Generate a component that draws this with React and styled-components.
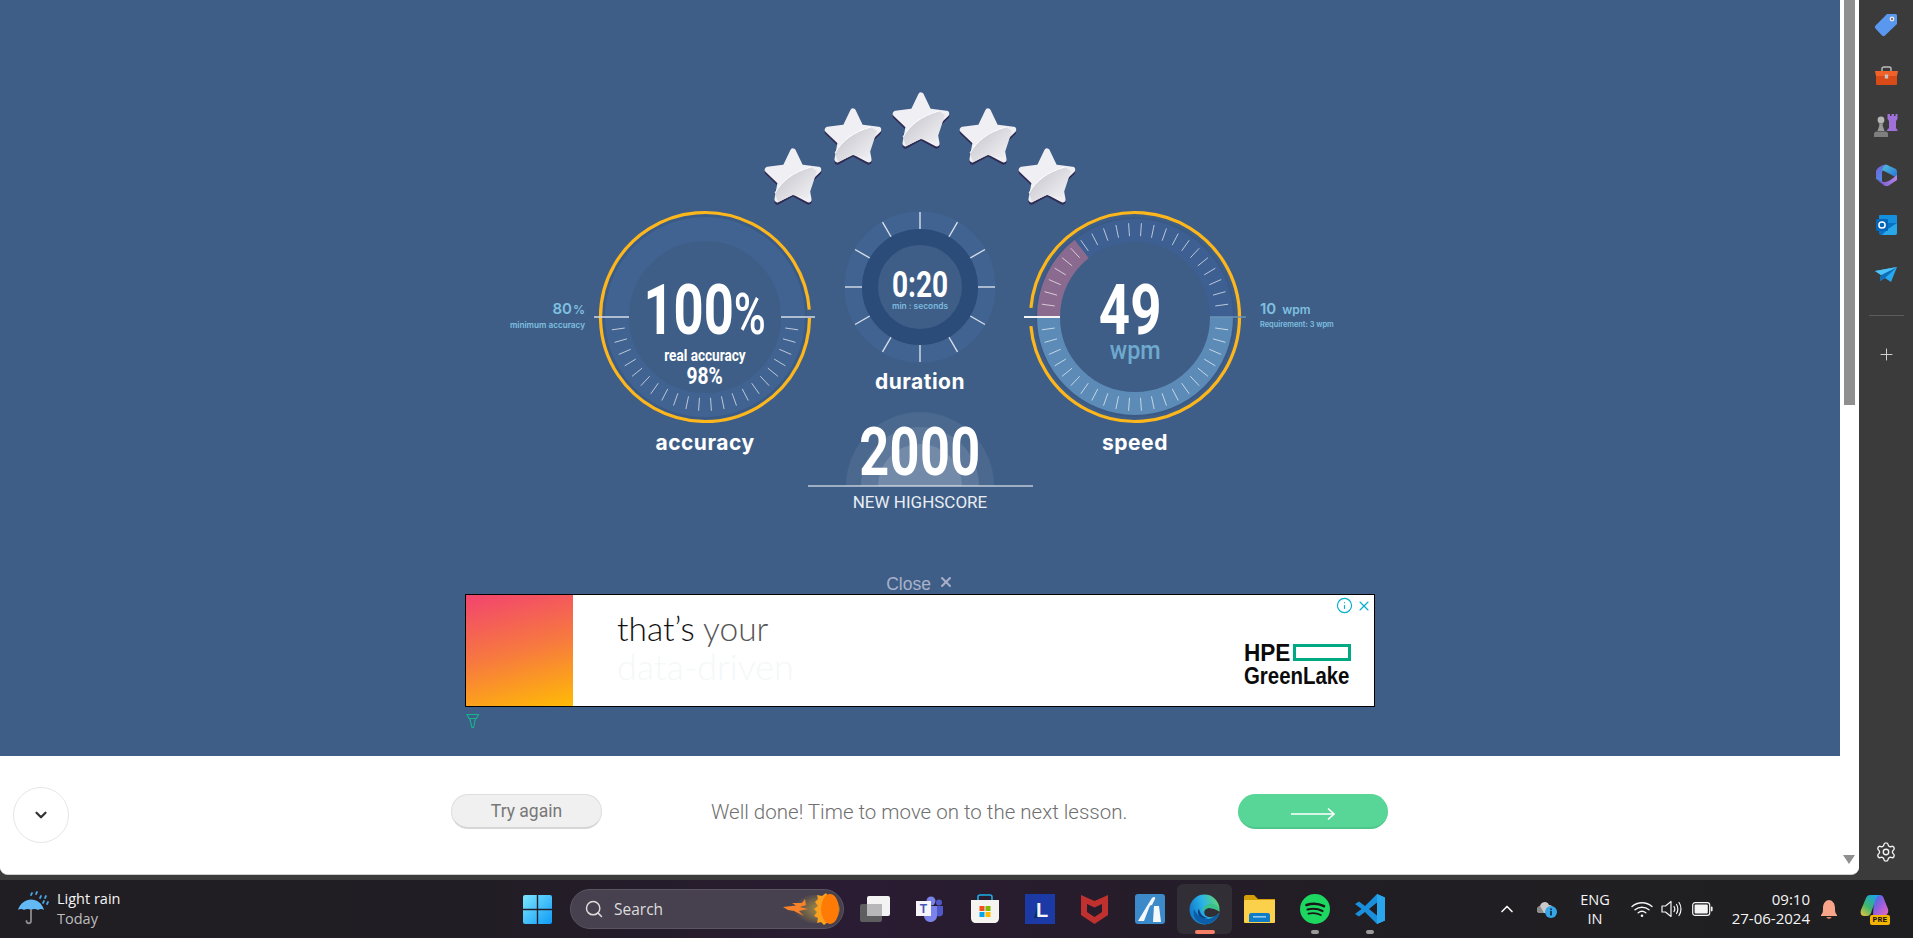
import React, { useId } from 'react';
import styled, { createGlobalStyle } from 'styled-components';
import { Search, ChevronDown, ChevronUp, Plus, Settings, X, Info } from 'lucide-react';

const GlobalStyle = createGlobalStyle`
  html, body {
    margin: 0;
    padding: 0;
    overflow: hidden;
    background: #3b3b3b;
    font-family: Roboto, "Liberation Sans", sans-serif;
  }
  * {
    box-sizing: border-box;
  }
`;

const polar = (c, r, deg) => {
  const a = (deg * Math.PI) / 180;
  return [c + r * Math.cos(a), c + r * Math.sin(a)];
};

const arcPath = (c, r, from, to) => {
  const [x0, y0] = polar(c, r, from);
  const [x1, y1] = polar(c, r, to);
  return `M${x0} ${y0}A${r} ${r} 0 ${to - from > 180 ? 1 : 0} 1 ${x1} ${y1}`;
};

function Ticks({ c, from, to, count, r0, r1, width, color, opacity }) {
  const items = [];
  for (let i = 0; i < count; i++) {
    const deg = (i * 360) / count;
    if (deg < from || deg > to) continue;
    const [x0, y0] = polar(c, r0, deg);
    const [x1, y1] = polar(c, r1, deg);
    items.push(<line key={i} x1={x0} y1={y0} x2={x1} y2={y1} stroke={color} strokeWidth={width} strokeOpacity={opacity} />);
  }
  return <g>{items}</g>;
}

function AccuracyDial() {
  return (
    <DialSvg width="224" height="224" viewBox="0 0 224 224">
      <circle cx="112" cy="112" r="101" fill="none" stroke="#3a5a85" strokeWidth="2" />
      <circle cx="112" cy="112" r="88" fill="none" stroke="#416391" strokeWidth="24" />
      <Ticks c={112} from={1} to={179} count={46} r0={81} r1={94} width={1} color="#fff" opacity={0.65} />
      <path d={arcPath(112, 104.5, 0.5, 356)} fill="none" stroke="#fdb71c" strokeWidth="3.2" />
      <line x1="1" y1="112" x2="36" y2="112" stroke="#d5dce6" strokeWidth="1.6" />
      <line x1="188" y1="112" x2="222" y2="112" stroke="#d5dce6" strokeWidth="1.6" />
    </DialSvg>
  );
}

function SpeedDial() {
  return (
    <DialSvg width="224" height="224" viewBox="0 0 224 224">
      <circle cx="112" cy="112" r="99" fill="none" stroke="#3a5a85" strokeWidth="2" />
      <path d={arcPath(112, 86.5, 180, 232)} fill="none" stroke="#8b6a8f" strokeWidth="23" />
      <path d={arcPath(112, 86.5, 232, 360)} fill="none" stroke="#3d5f92" strokeWidth="23" />
      <path d={arcPath(112, 86.5, 0, 180)} fill="none" stroke="#5b8bb6" strokeWidth="23" />
      <Ticks c={112} from={1} to={359} count={46} r0={81} r1={94} width={1} color="#fff" opacity={0.65} />
      <path d={arcPath(112, 104.5, -175, 175)} fill="none" stroke="#fdb71c" strokeWidth="3.2" />
      <line x1="1" y1="112" x2="37" y2="112" stroke="#f4f4f4" strokeWidth="2" />
      <line x1="187" y1="112" x2="223" y2="112" stroke="#6b94b4" strokeWidth="1.4" />
    </DialSvg>
  );
}

function DurationDial() {
  return (
    <DialSvg width="152" height="152" viewBox="0 0 152 152">
      <circle cx="76" cy="76" r="66.5" fill="none" stroke="#416391" strokeWidth="18" />
      <circle cx="76" cy="76" r="50" fill="none" stroke="#2b4c78" strokeWidth="16" />
      <Ticks c={76} from={0} to={360} count={12} r0={58} r1={75} width={1.4} color="#fff" opacity={0.8} />
    </DialSvg>
  );
}

function StarIcon({ top, left }) {
  const id = useId();
  const outer = [];
  for (let i = 0; i < 10; i++) {
    const r = i % 2 ? 13 : 26.5;
    const a = ((-90 + i * 36) * Math.PI) / 180;
    outer.push(`${30 + r * Math.cos(a)},${32 + r * Math.sin(a)}`);
  }
  const pts = outer.join(' ');
  return (
    <StarBox $top={top} $left={left} width="60" height="60" viewBox="0 0 60 60">
      <defs>
        <linearGradient id={`${id}g`} x1="0.9" y1="0.9" x2="0.25" y2="0.3">
          <stop offset="0" stopColor="#f1f1f4" />
          <stop offset="1" stopColor="#cfcfd6" />
        </linearGradient>
      </defs>
      <polygon points={pts} transform="translate(0 2.2)" fill="#2f2a52" stroke="#2f2a52" strokeWidth="6" strokeLinejoin="round" />
      <polygon points={pts} fill="#f0f0f4" stroke="#f0f0f4" strokeWidth="6" strokeLinejoin="round" />
      <path d="M12 47C19 35 30 26 48 21L54 25L45 52L30 49L15 56Z" fill={`url(#${id}g)`} />
      <path d="M12 47C19 35 30 26 48 21" fill="none" stroke="#fff" strokeWidth="1" />
    </StarBox>
  );
}

function HighscoreGlow() {
  return (
    <GlowSvg width="148" height="74" viewBox="0 0 148 74">
      <path d="M0 74A74 74 0 0 1 148 74Z" fill="#fff" fillOpacity="0.07" />
      <path d="M15 74A59 59 0 0 1 133 74Z" fill="#fff" fillOpacity="0.1" />
      <path d="M32 74A42 42 0 0 1 116 74Z" fill="#fff" fillOpacity="0.14" />
    </GlowSvg>
  );
}

function AdChoiceMark() {
  return (
    <svg width="14" height="16" viewBox="0 0 14 16" fill="none" stroke="#16b58a" strokeWidth="1.1">
      <path d="M1 1.5H12.5L10.5 5.5H3Z" />
      <path d="M3.6 5.5L6 14.5L7.6 14.5L9.4 5.5" />
    </svg>
  );
}

function UmbrellaIcon() {
  return (
    <svg width="32" height="38" viewBox="0 0 32 38">
      <path d="M1 20C3 13 9 9.5 14 9.5C20 9.5 25 13 27 20C25 18.5 23 18.5 21 20C19 18.5 16 18.5 14 20C12 18.5 9 18.5 7 20C5 18.5 3 18.5 1 20Z" fill="#62b9f5" />
      <path d="M14 20V31C14 34 9.5 34 9.5 31" fill="none" stroke="#8b8b8b" strokeWidth="1.8" strokeLinecap="round" />
      <g stroke="#4aa6ea" strokeWidth="1.7" strokeLinecap="round">
        <line x1="14" y1="5" x2="15" y2="3" />
        <line x1="19" y1="4" x2="20" y2="2" />
        <line x1="23" y1="8" x2="24" y2="6" />
        <line x1="28" y1="8" x2="29" y2="6" />
        <line x1="26" y1="13" x2="27" y2="11" />
        <line x1="30" y1="14" x2="31" y2="12" />
      </g>
    </svg>
  );
}

function WindowsLogo() {
  return (
    <svg width="29" height="29" viewBox="0 0 29 29">
      <defs>
        <linearGradient id="winA" x1="0" y1="0" x2="1" y2="1">
          <stop offset="0" stopColor="#7ce6ff" />
          <stop offset="1" stopColor="#0f9bf5" />
        </linearGradient>
      </defs>
      <path d="M0 2a2 2 0 0 1 2-2h11.8v13.8H0ZM15.2 0H27a2 2 0 0 1 2 2v11.8H15.2ZM0 15.2h13.8V29H2a2 2 0 0 1-2-2ZM15.2 15.2H29V27a2 2 0 0 1-2 2H15.2Z" fill="url(#winA)" />
    </svg>
  );
}

function CometIcon() {
  return (
    <svg width="58" height="34" viewBox="0 0 58 34">
      <defs>
        <radialGradient id="cometGlow" cx="0.7" cy="0.5" r="0.6">
          <stop offset="0" stopColor="#d6b23a" stopOpacity="0.8" />
          <stop offset="1" stopColor="#d6b23a" stopOpacity="0" />
        </radialGradient>
      </defs>
      <ellipse cx="32" cy="17" rx="26" ry="14" fill="url(#cometGlow)" />
      <path d="M1 15L14 13.5L10 11L20 11L23 7L24 13L18 15L26 17L17 19L22 24L12 19L6 18Z" fill="#f9812a" />
      <path d="M33 10L36 7L35 3L40 4L44 1L46 4V30L42 33L39 30L35 31L36 26L32 24L35 20L32 17L36 14Z" fill="#fca11f" />
      <ellipse cx="48" cy="17" rx="9" ry="15" fill="#ff7b06" />
    </svg>
  );
}

function TaskViewIcon() {
  return (
    <svg width="30" height="26" viewBox="0 0 30 26">
      <rect x="0" y="8" width="22" height="18" rx="2" fill="#5e5e60" />
      <rect x="7" y="0" width="23" height="20" rx="2" fill="#f3f3f3" />
      <rect x="7" y="8" width="15" height="12" fill="#b7b7b9" />
    </svg>
  );
}

function TeamsIcon() {
  return (
    <svg width="28" height="26" viewBox="0 0 28 26">
      <circle cx="15" cy="5" r="4.5" fill="#7b83eb" />
      <circle cx="23" cy="6.5" r="3" fill="#5059c9" />
      <path d="M18 10H27V17C27 20 24 21 21 20Z" fill="#5059c9" />
      <path d="M8 10H21V20C21 24 17 26 14 26C11 26 8 23 8 20Z" fill="#7b83eb" />
      <rect x="0" y="5" width="15" height="15" fill="#f5f5fb" />
      <text x="7.5" y="17" textAnchor="middle" fontFamily="Liberation Sans" fontWeight="700" fontSize="12" fill="#4b53bc">T</text>
    </svg>
  );
}

function StoreIcon() {
  return (
    <svg width="30" height="30" viewBox="0 0 30 30">
      <path d="M8 6V3C8 1 9 1 10 1H20C21 1 22 1 22 3V6" fill="none" stroke="#1dade8" strokeWidth="1.6" />
      <path d="M1 6H29V24C29 27 27 29 24 29H6C3 29 1 27 1 24Z" fill="#f6f4f0" />
      <rect x="9.5" y="12" width="5" height="5" fill="#f25022" />
      <rect x="15.5" y="12" width="5" height="5" fill="#7fba00" />
      <rect x="9.5" y="18" width="5" height="5" fill="#00a4ef" />
      <rect x="15.5" y="18" width="5" height="5" fill="#ffb900" />
    </svg>
  );
}

function LingoIcon() {
  return (
    <svg width="30" height="30" viewBox="0 0 30 30">
      <rect width="30" height="30" fill="#1c3aa6" />
      <path d="M9 24L13 9V24Z" fill="#0f2a5c" />
      <text x="17" y="23" textAnchor="middle" fontFamily="Liberation Sans" fontWeight="700" fontSize="20" fill="#f3f5fb">L</text>
    </svg>
  );
}

function McAfeeIcon() {
  return (
    <svg width="27" height="30" viewBox="0 0 27 30">
      <path fillRule="evenodd" d="M0 1L13.5 7L27 1V21L13.5 30L0 21ZM6 10V18L13.5 23L21 18V10L13.5 13.5Z" fill="#c0302f" />
    </svg>
  );
}

function ArcIcon() {
  return (
    <svg width="30" height="30" viewBox="0 0 30 30">
      <rect width="30" height="30" rx="3" fill="#3d8acb" />
      <path d="M3 27L12 12L17 4C19 2 21 3 20 5L17 11C15 11 15 12 14 14L9 27Z" fill="#f4f8fb" />
      <path d="M19 12H24L26 28H18Z" fill="#f4f8fb" />
    </svg>
  );
}

function EdgeIcon() {
  return (
    <svg width="31" height="31" viewBox="0 0 31 31">
      <defs>
        <linearGradient id="edgeA" x1="0" y1="0.6" x2="1" y2="0.3">
          <stop offset="0" stopColor="#1377c9" />
          <stop offset="0.5" stopColor="#2bb3e8" />
          <stop offset="1" stopColor="#5ed66f" />
        </linearGradient>
      </defs>
      <circle cx="15.5" cy="15.5" r="15" fill="url(#edgeA)" />
      <path d="M31 19C28 27 20 31 15 30C7 29 3 22 5 15C9 24 19 27 24 23C28 20 30 20 31 19Z" fill="#0d5ea9" />
      <path d="M30.5 18C28 23 19 25 16 21C14 18 16 14 20 14C25 14 30 17 30.5 18Z" fill="#312e35" />
      <path d="M30 16C30 12 25 9 20 10C16 11 13 14 13 18C15 15 17 14 20 14C24 14 28 15 30 17Z" fill="#39c08b" />
      <path d="M10 15C11 19 13 23 19 24C14 25 8 23 9 16Z" fill="#0a3f7c" />
    </svg>
  );
}

function FolderIcon() {
  return (
    <svg width="31" height="28" viewBox="0 0 31 28">
      <path d="M0 2C0 1 1 0 2 0H10L14 4H31V12H0Z" fill="#d39f09" />
      <rect y="5" width="31" height="23" rx="1" fill="#fbd04b" />
      <path d="M5 27V20C5 19 6 18 7 18H24C25 18 26 19 26 20V27Z" fill="#0f7cc7" />
      <rect x="9" y="21" width="13" height="1.6" fill="#8fcbf2" />
    </svg>
  );
}

function SpotifyIcon() {
  return (
    <svg width="30" height="30" viewBox="0 0 30 30" fill="none" stroke="#181818" strokeLinecap="round">
      <circle cx="15" cy="15" r="15" fill="#1ed760" stroke="none" />
      <path d="M6.5 11C12 9.3 19 9.7 24 12.2" strokeWidth="2.6" />
      <path d="M7.5 15.5C12.5 14.2 18 14.7 22.5 17" strokeWidth="2.2" />
      <path d="M8.5 19.7C12.5 18.8 17 19.1 20.8 21" strokeWidth="1.8" />
    </svg>
  );
}

function VsCodeIcon() {
  return (
    <svg width="30" height="30" viewBox="0 0 30 30">
      <path fillRule="evenodd" d="M22 0L10 12L4 7.5L0 10L6.5 15L0 20L4 22.5L10 18L22 30L30 26.5V3.5ZM22 8.5L14 15L22 21.5Z" fill="#1a8fdc" />
      <path d="M22 0L30 3.5V26.5L22 30Z" fill="#2aa6ed" />
    </svg>
  );
}

function CloudInfoIcon() {
  return (
    <svg width="22" height="20" viewBox="0 0 22 20">
      <path d="M1 11C1 8 3 7 4 7C5 3 11 1 13 6C16 6 17 8 17 10V14H4C2 14 1 13 1 11Z" fill="#c9c9c9" />
      <path d="M1 11C1 8 3 7 4 7L8 14H4C2 14 1 13 1 11Z" fill="#8a8a8a" />
      <circle cx="15" cy="13" r="6" fill="#35a6e8" />
      <rect x="14.2" y="12" width="1.6" height="4.5" fill="#10243a" />
      <rect x="14.2" y="9.5" width="1.6" height="1.6" fill="#10243a" />
    </svg>
  );
}

function WifiIcon() {
  return (
    <svg width="22" height="18" viewBox="0 0 22 18" fill="none" stroke="#f4f4f4" strokeWidth="1.4" strokeLinecap="round">
      <path d="M1 6.5C6.5 1.5 15.5 1.5 21 6.5" />
      <path d="M4 9.8C8 6.4 14 6.4 18 9.8" />
      <path d="M7.2 12.8C9.5 11 12.5 11 14.8 12.8" />
      <circle cx="11" cy="15.8" r="1.3" fill="#f4f4f4" stroke="none" />
    </svg>
  );
}

function VolumeIcon() {
  return (
    <svg width="22" height="18" viewBox="0 0 22 18" fill="none" stroke="#f4f4f4" strokeWidth="1.2" strokeLinejoin="round" strokeLinecap="round">
      <path d="M1 6H4.5L10 1.5V16.5L4.5 12H1Z" />
      <path d="M13 6.5C14 8 14 10 13 11.5" />
      <path d="M15.5 4.5C17.3 7 17.3 11 15.5 13.5" />
      <path d="M18 2.5C20.6 6 20.6 12 18 15.5" />
    </svg>
  );
}

function BatteryIcon() {
  return (
    <svg width="21" height="14" viewBox="0 0 21 14">
      <rect x="0.7" y="0.7" width="17" height="12.6" rx="2.4" fill="none" stroke="#f4f4f4" strokeWidth="1.2" />
      <rect x="2.6" y="2.6" width="13.2" height="8.8" rx="1" fill="#f4f4f4" />
      <rect x="18.8" y="4.6" width="1.8" height="4.8" rx="0.8" fill="#f4f4f4" />
    </svg>
  );
}

function BellIcon() {
  return (
    <svg width="18" height="21" viewBox="0 0 18 21">
      <path d="M1 16C3 14 3 12 3 9C3 4 6 1 9 1C12 1 15 4 15 9C15 12 15 14 17 16V17H1Z" fill="#f7a488" />
      <path d="M6.5 18H11.5C11.5 20.4 6.5 20.4 6.5 18Z" fill="#d9825f" />
    </svg>
  );
}

function CopilotPre() {
  return (
    <CopilotBox>
      <svg width="29" height="26" viewBox="0 0 29 26">
        <defs>
          <linearGradient id="copA" x1="0" y1="1" x2="0.8" y2="0">
            <stop offset="0" stopColor="#f6c33c" />
            <stop offset="0.45" stopColor="#3fb56b" />
            <stop offset="1" stopColor="#18a4ee" />
          </linearGradient>
          <linearGradient id="copB" x1="0" y1="0" x2="1" y2="1">
            <stop offset="0" stopColor="#2b6fe4" />
            <stop offset="0.55" stopColor="#a25fdc" />
            <stop offset="1" stopColor="#ea6ab8" />
          </linearGradient>
        </defs>
        <path d="M14 1H20C22 1 23 2 24 5L28 15C29 18 27 22 24 22H13Z" fill="url(#copB)" />
        <path d="M10 1H20C17 2 16 4 15 7L11 19C10 21 9 22 7 22H4C1 22 0 19 1 16L6 4C7 2 8 1 10 1Z" fill="url(#copA)" />
      </svg>
      <PreBadge>PRE</PreBadge>
    </CopilotBox>
  );
}

function TagIcon() {
  return (
    <svg width="24" height="24" viewBox="0 0 24 24">
      <path d="M13 1H21C22.5 1 23 1.5 23 3V11L11 22.5C10 23.4 9 23.4 8 22.5L1.5 15.5C0.6 14.5 0.7 13.5 1.6 12.6Z" fill="#5a97ee" />
      <circle cx="18" cy="6" r="2.4" fill="#e8e8e8" />
      <circle cx="18" cy="6" r="1" fill="#5a5a5a" />
    </svg>
  );
}

function ToolboxIcon() {
  return (
    <svg width="23" height="19" viewBox="0 0 23 19">
      <path d="M7 5V2.5C7 1.5 8 1 9 1H14C15 1 16 1.5 16 2.5V5" fill="none" stroke="#bdbdbd" strokeWidth="1.4" />
      <path d="M0 5H23L22 10H1Z" fill="#f0622a" />
      <path d="M1 10H22V18C22 18.5 21.5 19 21 19H2C1.5 19 1 18.5 1 18Z" fill="#d84a17" />
      <rect x="9.8" y="8.5" width="3.4" height="4" rx="0.5" fill="#c4c4c4" />
    </svg>
  );
}

function ChessIcon() {
  return (
    <svg width="24" height="24" viewBox="0 0 24 24">
      <path d="M13.5 1H16V3H17.5V1H20V3H21.5V1H23.5V6L22 8V15L23.5 17V18H13V17L15 15V8L13.5 6Z" fill="#a071d9" />
      <circle cx="7" cy="7" r="3.4" fill="#b5b5b5" />
      <path d="M4.5 10.5H9.5L8.5 12L10.5 18H3.5L5.5 12Z" fill="#9a9a9a" />
      <path d="M0 24V21C0 19.5 1 18.5 2.5 18.5H11.5C13 18.5 14 19.5 14 21V24Z" fill="#7e7e7e" />
    </svg>
  );
}

function M365Icon() {
  return (
    <svg width="21" height="22" viewBox="0 0 21 22">
      <defs>
        <linearGradient id="mA" x1="0" y1="0" x2="1" y2="1">
          <stop offset="0" stopColor="#7a5ed8" />
          <stop offset="1" stopColor="#3aa0e8" />
        </linearGradient>
        <linearGradient id="mB" x1="0" y1="0" x2="1" y2="1">
          <stop offset="0" stopColor="#4fc3d8" />
          <stop offset="1" stopColor="#2a6fd8" />
        </linearGradient>
        <linearGradient id="mC" x1="0" y1="0" x2="1" y2="0">
          <stop offset="0" stopColor="#6a58d0" />
          <stop offset="1" stopColor="#b582e8" />
        </linearGradient>
      </defs>
      <path d="M9 0.5C5 1.5 1 4 0 7V15L6 18V9C6 6 8 5 11 4L13 2Z" fill="url(#mA)" />
      <path d="M10 0.5L20 5C21 6 21 8 21 9V14L14 10L6 6C7 4 8 2 10 0.5Z" fill="url(#mB)" />
      <path d="M1 16L8 18C11 18.5 15 16 21 11V16L12 22H9Z" fill="url(#mC)" />
      <path d="M7 8L14 11V14L8 17Z" fill="#3b3b3b" />
    </svg>
  );
}

function OutlookIcon() {
  return (
    <svg width="21" height="20" viewBox="0 0 21 20">
      <rect x="3" y="0" width="18" height="9" rx="1" fill="#1490df" />
      <path d="M3 8H21V18C21 19 20 20 19 20H5C4 20 3 19 3 18Z" fill="#0a72c4" />
      <path d="M12 14L21 8V18C21 19 20 20 19 20H6Z" fill="#28a8ea" />
      <rect x="0" y="4" width="12" height="12" rx="1" fill="#0364b8" />
      <circle cx="6" cy="10" r="3.1" fill="none" stroke="#fff" strokeWidth="1.5" />
    </svg>
  );
}

function PlaneIcon() {
  return (
    <svg width="22" height="16" viewBox="0 0 22 16">
      <path d="M0 4L22 0L16 15L10 11L5 14L6 8Z" fill="#27a8ee" />
      <path d="M6 8L22 0L10 11L5 14Z" fill="#0d6fb8" />
      <path d="M0 4L22 0L6 8Z" fill="#4fc3f7" />
    </svg>
  );
}

const Page = styled.div`
  width: 1913px;
  height: 938px;
  display: flex;
  flex-direction: column;
  overflow: hidden;
`;

const Desktop = styled.div`
  height: 880px;
  display: flex;
  background: #3b3b3b;
`;

const Browser = styled.div`
  width: 1859px;
  height: 875px;
  display: flex;
  background: #fff;
  border-bottom: 1px solid #cfcfcf;
  border-radius: 0 0 8px 8px;
  overflow: hidden;
`;

const Content = styled.main`
  width: 1840px;
  display: flex;
  flex-direction: column;
`;

const Stage = styled.section`
  height: 756px;
  padding-top: 90px;
  display: flex;
  flex-direction: column;
  align-items: center;
  background: #3e5e87;
  color: #fff;
`;

const Stars = styled.div`
  display: flex;
  align-items: flex-start;
  height: 115px;
`;

const StarBox = styled.svg`
  flex: none;
  margin-top: ${({ $top }) => $top}px;
  margin-left: ${({ $left }) => $left}px;
`;

const Results = styled.div`
  display: flex;
  align-items: flex-start;
  gap: 27px;
`;

const SideNote = styled.div`
  width: 153px;
  margin-top: 94px;
  display: flex;
  flex-direction: column;
  align-items: ${({ $right }) => ($right ? 'flex-start' : 'flex-end')};
  padding: ${({ $right }) => ($right ? '0 0 0 13px' : '0 8px 0 0')};
  margin-right: ${({ $right }) => ($right ? '0' : '-27px')};
  margin-left: ${({ $right }) => ($right ? '-27px' : '0')};
  color: #7fc0e0;
  font-family: Inter, sans-serif;
  font-weight: 600;
`;

const NoteValue = styled.div`
  font-size: 15px;
  line-height: 20px;
  span {
    font-size: ${({ $unit }) => $unit}px;
    margin-left: ${({ $gap }) => $gap}px;
  }
`;

const NoteCaption = styled.div`
  font-size: ${({ $size }) => $size}px;
  line-height: 10px;
  white-space: nowrap;
`;

const Column = styled.div`
  flex: none;
  width: ${({ $w }) => $w}px;
  display: flex;
  flex-direction: column;
  align-items: center;
  margin-top: ${({ $top }) => $top || 0}px;
`;

const Dial = styled.div`
  display: grid;
  width: ${({ $size }) => $size}px;
  height: ${({ $size }) => $size}px;
  > * {
    grid-area: 1 / 1;
  }
`;

const DialSvg = styled.svg`
  display: block;
`;

const DialText = styled.div`
  display: flex;
  flex-direction: column;
  align-items: center;
  padding-top: ${({ $top }) => $top}px;
`;

const Narrow = styled.span`
  display: inline-block;
  white-space: nowrap;
  transform: scaleX(${({ $x }) => $x || 0.78});
`;

const BigValue = styled(Narrow)`
  margin-right: ${({ $nudge }) => $nudge || 0}px;
  font-size: 70px;
  font-weight: 700;
  line-height: 56px;
  small {
    font-size: 58px;
    font-weight: 500;
  }
`;

const RealLabel = styled(Narrow)`
  margin-top: 3px;
  font-size: 17px;
  font-weight: 700;
  line-height: 20px;
`;

const RealValue = styled(Narrow)`
  font-size: 24px;
  font-weight: 700;
  line-height: 22px;
`;

const Unit = styled(Narrow)`
  font-size: 26px;
  font-weight: 500;
  line-height: 24px;
  color: #6fa9cd;
`;

const ClockValue = styled(Narrow)`
  font-size: 36px;
  font-weight: 700;
  line-height: 36px;
`;

const ClockCaption = styled.span`
  margin-top: -3px;
  font-family: Inter, sans-serif;
  font-size: 8.4px;
  font-weight: 600;
  line-height: 12px;
  color: #7dbbde;
`;

const DialLabel = styled.div`
  margin-top: ${({ $top }) => $top}px;
  font-family: Inter, sans-serif;
  font-size: 21px;
  font-weight: 700;
  line-height: 26px;
  letter-spacing: 0.5px;
`;

const Highscore = styled.div`
  display: grid;
  justify-items: center;
  flex: none;
  width: 225px;
  height: 75px;
  margin-top: 17px;
  border-bottom: 2px solid rgba(255, 255, 255, 0.5);
  > * {
    grid-area: 1 / 1;
  }
`;

const GlowSvg = styled.svg`
  display: block;
  align-self: end;
`;

const Score = styled(Narrow)`
  margin-top: 6px;
  font-size: 67px;
  font-weight: 700;
  line-height: 68px;
  letter-spacing: 0.5px;
`;

const HighscoreCaption = styled.div`
  margin-top: 5px;
  font-size: 17px;
  line-height: 20px;
  white-space: nowrap;
  color: #e8edf3;
`;

const CloseLink = styled.div`
  display: flex;
  align-items: flex-start;
  gap: 7px;
  margin-top: 62px;
  font-family: "Liberation Sans", sans-serif;
  font-size: 17.5px;
  line-height: 20px;
  color: #aab1c9;
`;

const AdBlock = styled.div`
  width: 910px;
`;

const AdFrame = styled.div`
  position: relative;
  height: 113px;
  display: flex;
  background: #fff;
  border: 1px solid #000;
`;

const AdSwatch = styled.div`
  width: 107px;
  background: linear-gradient(165deg, #f2446f 0%, #f7793f 50%, #ffbb05 100%);
`;

const AdCopy = styled.div`
  margin-left: 44px;
  padding-top: 13px;
  font-family: Lato, sans-serif;
  font-weight: 300;
  font-size: 33.5px;
  line-height: 40px;
  color: #111;
  span {
    color: #555;
  }
`;

const AdGhost = styled.div`
  margin-top: -2px;
  font-size: 36px;
  color: #f4f8f7;
`;

const AdLogo = styled.div`
  margin-left: auto;
  margin-right: 23px;
  padding-top: 46px;
  width: 107px;
  font-family: "Liberation Sans", sans-serif;
  font-weight: 700;
  font-size: 24px;
  line-height: 23px;
  color: #0b0b0b;
`;

const HpeRow = styled.div`
  display: flex;
  align-items: center;
  justify-content: space-between;
`;

const LogoWord = styled(Narrow)`
  transform-origin: left center;
`;

const HpeBar = styled.div`
  width: 58px;
  height: 17px;
  border: 3px solid #01a982;
`;

const AdControls = styled.div`
  position: absolute;
  top: 2px;
  right: 2px;
  display: flex;
  align-items: center;
  gap: 3px;
  color: #00aecd;
`;

const AdChoice = styled.div`
  margin: 6px 0 0 1px;
`;

const ActionBar = styled.div`
  height: 118px;
  padding-left: 13px;
  display: flex;
  align-items: center;
  background: #fff;
`;

const CollapseButton = styled.div`
  flex: none;
  width: 56px;
  height: 56px;
  display: flex;
  align-items: center;
  justify-content: center;
  border: 1px solid #e6e6e6;
  border-radius: 50%;
  color: #333;
`;

const TryAgain = styled.div`
  flex: none;
  width: 151px;
  height: 35px;
  margin: 0 0 8px 382px;
  display: flex;
  align-items: center;
  justify-content: center;
  background: #f0f0f0;
  border: 1px solid #dedede;
  border-bottom: 2px solid #d6d6d6;
  border-radius: 17px;
  font-size: 17.5px;
  color: #777;
`;

const Message = styled.div`
  flex: none;
  width: 418px;
  margin: 0 0 6px 109px;
  font-size: 20.5px;
  font-weight: 300;
  white-space: nowrap;
  color: #6f6f6f;
`;

const NextButton = styled.div`
  flex: none;
  width: 150px;
  height: 35px;
  margin: 0 0 8px 109px;
  padding-top: 8px;
  display: flex;
  align-items: center;
  justify-content: center;
  background: #57d697;
  border-bottom: 2px solid #4fc78b;
  border-radius: 18px;
`;

const Scrollbar = styled.div`
  width: 19px;
  padding: 0 4px;
  display: flex;
  flex-direction: column;
  background: #fff;
`;

const ScrollThumb = styled.div`
  height: 405px;
  width: 11px;
  background: #8f8f8f;
`;

const ScrollArrow = styled.div`
  width: 0;
  height: 0;
  margin-top: 450px;
  border-left: 6.5px solid transparent;
  border-right: 6.5px solid transparent;
  border-top: 9px solid #8f8f8f;
  margin-left: -1px;
`;

const SideBar = styled.aside`
  width: 54px;
  display: flex;
  flex-direction: column;
  align-items: center;
  padding-bottom: 3px;
  color: #d8d8d8;
`;

const SideSlot = styled.div`
  width: 54px;
  height: 50px;
  flex: none;
  display: flex;
  align-items: center;
  justify-content: center;
  margin-top: ${({ $auto }) => ($auto ? 'auto' : '0')};
`;

const SideRule = styled.div`
  width: 35px;
  height: 1px;
  margin: 15px 0 13px;
  background: #5c5c5c;
`;

const Taskbar = styled.footer`
  height: 58px;
  display: flex;
  align-items: center;
  color: #f5f5f5;
  font-family: "Open Sans", "Noto Sans", sans-serif;
  background: linear-gradient(90deg, #201e22 0%, #211d24 25%, #2a1c33 45%, #271c2c 55%, #201e22 75%, #1f1f21 100%);
`;

const Weather = styled.div`
  width: 510px;
  padding-left: 17px;
  display: flex;
  align-items: center;
  gap: 8px;
`;

const WeatherText = styled.div`
  font-size: 14.5px;
  line-height: 20px;
  div + div {
    color: #bdbdbd;
  }
`;

const SearchBox = styled.div`
  width: 274px;
  height: 40px;
  margin: 0 3px 0 5px;
  padding: 0 3px 0 13px;
  display: flex;
  align-items: center;
  gap: 10px;
  background: #47414f;
  border: 1px solid #5a5561;
  border-radius: 20px;
  color: #dcdcdc;
  font-size: 15.5px;
  span {
    margin-right: auto;
  }
`;

const TaskSlot = styled.div`
  position: relative;
  flex: none;
  width: 55px;
  height: 50px;
  display: flex;
  align-items: center;
  justify-content: center;
  border-radius: 6px;
  background: ${({ $active }) => ($active ? '#312e35' : 'transparent')};
`;

const RunDot = styled.i`
  position: absolute;
  left: 50%;
  bottom: 0;
  width: ${({ $active }) => ($active ? 20 : 8)}px;
  height: 4px;
  margin-left: ${({ $active }) => ($active ? -10 : -4)}px;
  border-radius: 2px;
  background: ${({ $active }) => ($active ? '#f47f66' : '#9a9a9a')};
`;

const Tray = styled.div`
  margin-left: auto;
  padding-right: 13px;
  display: flex;
  align-items: center;
`;

const TraySlot = styled.div`
  flex: none;
  width: ${({ $w }) => $w}px;
  display: flex;
  flex-direction: column;
  align-items: ${({ $end }) => ($end ? 'flex-end' : 'center')};
  justify-content: center;
  font-size: ${({ $end }) => ($end ? 15 : 14.5)}px;
  line-height: 19.5px;
  white-space: nowrap;
`;

const CopilotBox = styled.div`
  position: relative;
  width: 29px;
  height: 30px;
`;

const PreBadge = styled.div`
  position: absolute;
  right: -1px;
  bottom: -1px;
  padding: 0 2px;
  background: #f4b400;
  border-radius: 2px;
  font-family: "Liberation Mono", monospace;
  font-weight: 700;
  font-size: 8px;
  line-height: 10px;
  letter-spacing: 0.2px;
  color: #111;
`;

const taskIcons = [
  { key: 'task', icon: <TaskViewIcon /> },
  { key: 'teams', icon: <TeamsIcon /> },
  { key: 'store', icon: <StoreIcon /> },
  { key: 'lingo', icon: <LingoIcon /> },
  { key: 'mcafee', icon: <McAfeeIcon /> },
  { key: 'arc', icon: <ArcIcon /> },
  { key: 'edge', icon: <EdgeIcon />, active: true },
  { key: 'files', icon: <FolderIcon /> },
  { key: 'spotify', icon: <SpotifyIcon />, running: true },
  { key: 'code', icon: <VsCodeIcon />, running: true },
];

const stars = [
  { top: 56, left: 0 },
  { top: 16, left: 0 },
  { top: 0, left: 8 },
  { top: 16, left: 7 },
  { top: 56, left: -1 },
];

export default function App() {
  return (
    <Page>
      <GlobalStyle />
      <Desktop>
        <Browser>
          <Content>
            <Stage>
              <Stars>
                {stars.map((s, i) => (
                  <StarIcon key={i} top={s.top} left={s.left} />
                ))}
              </Stars>
              <Results>
                <SideNote>
                  <NoteValue $unit={12} $gap={1}>80<span>%</span></NoteValue>
                  <NoteCaption $size={8.2}>minimum accuracy</NoteCaption>
                </SideNote>
                <Column $w={224}>
                  <Dial $size={224}>
                    <AccuracyDial />
                    <DialText $top={77}>
                      <BigValue $x={0.75}>100<small>%</small></BigValue>
                      <RealLabel $x={0.8}>real accuracy</RealLabel>
                      <RealValue $x={0.8}>98%</RealValue>
                    </DialText>
                  </Dial>
                  <DialLabel $top={1}>accuracy</DialLabel>
                </Column>
                <Column $w={152} $top={6}>
                  <Dial $size={152}>
                    <DurationDial />
                    <DialText $top={56}>
                      <ClockValue $x={0.78}>0:20</ClockValue>
                      <ClockCaption>min : seconds</ClockCaption>
                    </DialText>
                  </Dial>
                  <DialLabel $top={6}>duration</DialLabel>
                  <Highscore>
                    <HighscoreGlow />
                    <Score $x={0.78}>2000</Score>
                  </Highscore>
                  <HighscoreCaption>NEW HIGHSCORE</HighscoreCaption>
                </Column>
                <Column $w={224}>
                  <Dial $size={224}>
                    <SpeedDial />
                    <DialText $top={77}>
                      <BigValue $x={0.78} $nudge={9}>49</BigValue>
                      <Unit $x={0.9}>wpm</Unit>
                    </DialText>
                  </Dial>
                  <DialLabel $top={1}>speed</DialLabel>
                </Column>
                <SideNote $right>
                  <NoteValue $unit={12} $gap={6}>10<span>wpm</span></NoteValue>
                  <NoteCaption $size={7.4}>Requirement: 3 wpm</NoteCaption>
                </SideNote>
              </Results>
              <CloseLink>
                Close
                <X size={16} strokeWidth={3} />
              </CloseLink>
              <AdBlock>
                <AdFrame>
                  <AdSwatch />
                  <AdCopy>
                    that’s <span>your</span>
                    <AdGhost>data-driven</AdGhost>
                  </AdCopy>
                  <AdLogo>
                    <HpeRow>
                      <LogoWord $x={0.94}>HPE</LogoWord>
                      <HpeBar />
                    </HpeRow>
                    <LogoWord $x={0.85}>GreenLake</LogoWord>
                  </AdLogo>
                  <AdControls>
                    <Info size={17} strokeWidth={1.6} />
                    <X size={16} strokeWidth={1.6} />
                  </AdControls>
                </AdFrame>
                <AdChoice>
                  <AdChoiceMark />
                </AdChoice>
              </AdBlock>
            </Stage>
            <ActionBar>
              <CollapseButton>
                <ChevronDown size={18} strokeWidth={3} />
              </CollapseButton>
              <TryAgain>Try again</TryAgain>
              <Message>Well done! Time to move on to the next lesson.</Message>
              <NextButton>
                <svg width="44" height="14" viewBox="0 0 44 14" fill="none" stroke="#fff" strokeWidth="1.6">
                  <path d="M0 7H43M37 1.5L43 7L37 12.5" />
                </svg>
              </NextButton>
            </ActionBar>
          </Content>
          <Scrollbar>
            <ScrollThumb />
            <ScrollArrow />
          </Scrollbar>
        </Browser>
        <SideBar>
          <SideSlot><TagIcon /></SideSlot>
          <SideSlot><ToolboxIcon /></SideSlot>
          <SideSlot><ChessIcon /></SideSlot>
          <SideSlot><M365Icon /></SideSlot>
          <SideSlot><OutlookIcon /></SideSlot>
          <SideSlot><PlaneIcon /></SideSlot>
          <SideRule />
          <SideSlot><Plus size={19} strokeWidth={1.2} /></SideSlot>
          <SideSlot $auto><Settings size={22} strokeWidth={1.5} color="#f2f2f2" /></SideSlot>
        </SideBar>
      </Desktop>
      <Taskbar>
        <Weather>
          <UmbrellaIcon />
          <WeatherText>
            <div>Light rain</div>
            <div>Today</div>
          </WeatherText>
        </Weather>
        <TaskSlot><WindowsLogo /></TaskSlot>
        <SearchBox>
          <Search size={20} strokeWidth={1.8} />
          <span>Search</span>
          <CometIcon />
        </SearchBox>
        {taskIcons.map((t) => (
          <TaskSlot key={t.key} $active={t.active}>
            {t.icon}
            {(t.active || t.running) && <RunDot $active={t.active} />}
          </TaskSlot>
        ))}
        <Tray>
          <TraySlot $w={40}><ChevronUp size={20} strokeWidth={2} /></TraySlot>
          <TraySlot $w={40}><CloudInfoIcon /></TraySlot>
          <TraySlot $w={56}>
            <div>ENG</div>
            <div>IN</div>
          </TraySlot>
          <TraySlot $w={38}><WifiIcon /></TraySlot>
          <TraySlot $w={22}><VolumeIcon /></TraySlot>
          <TraySlot $w={38}><BatteryIcon /></TraySlot>
          <TraySlot $w={89} $end>
            <div>09:10</div>
            <div>27-06-2024</div>
          </TraySlot>
          <TraySlot $w={38}><BellIcon /></TraySlot>
          <TraySlot $w={52}><CopilotPre /></TraySlot>
        </Tray>
      </Taskbar>
    </Page>
  );
}
